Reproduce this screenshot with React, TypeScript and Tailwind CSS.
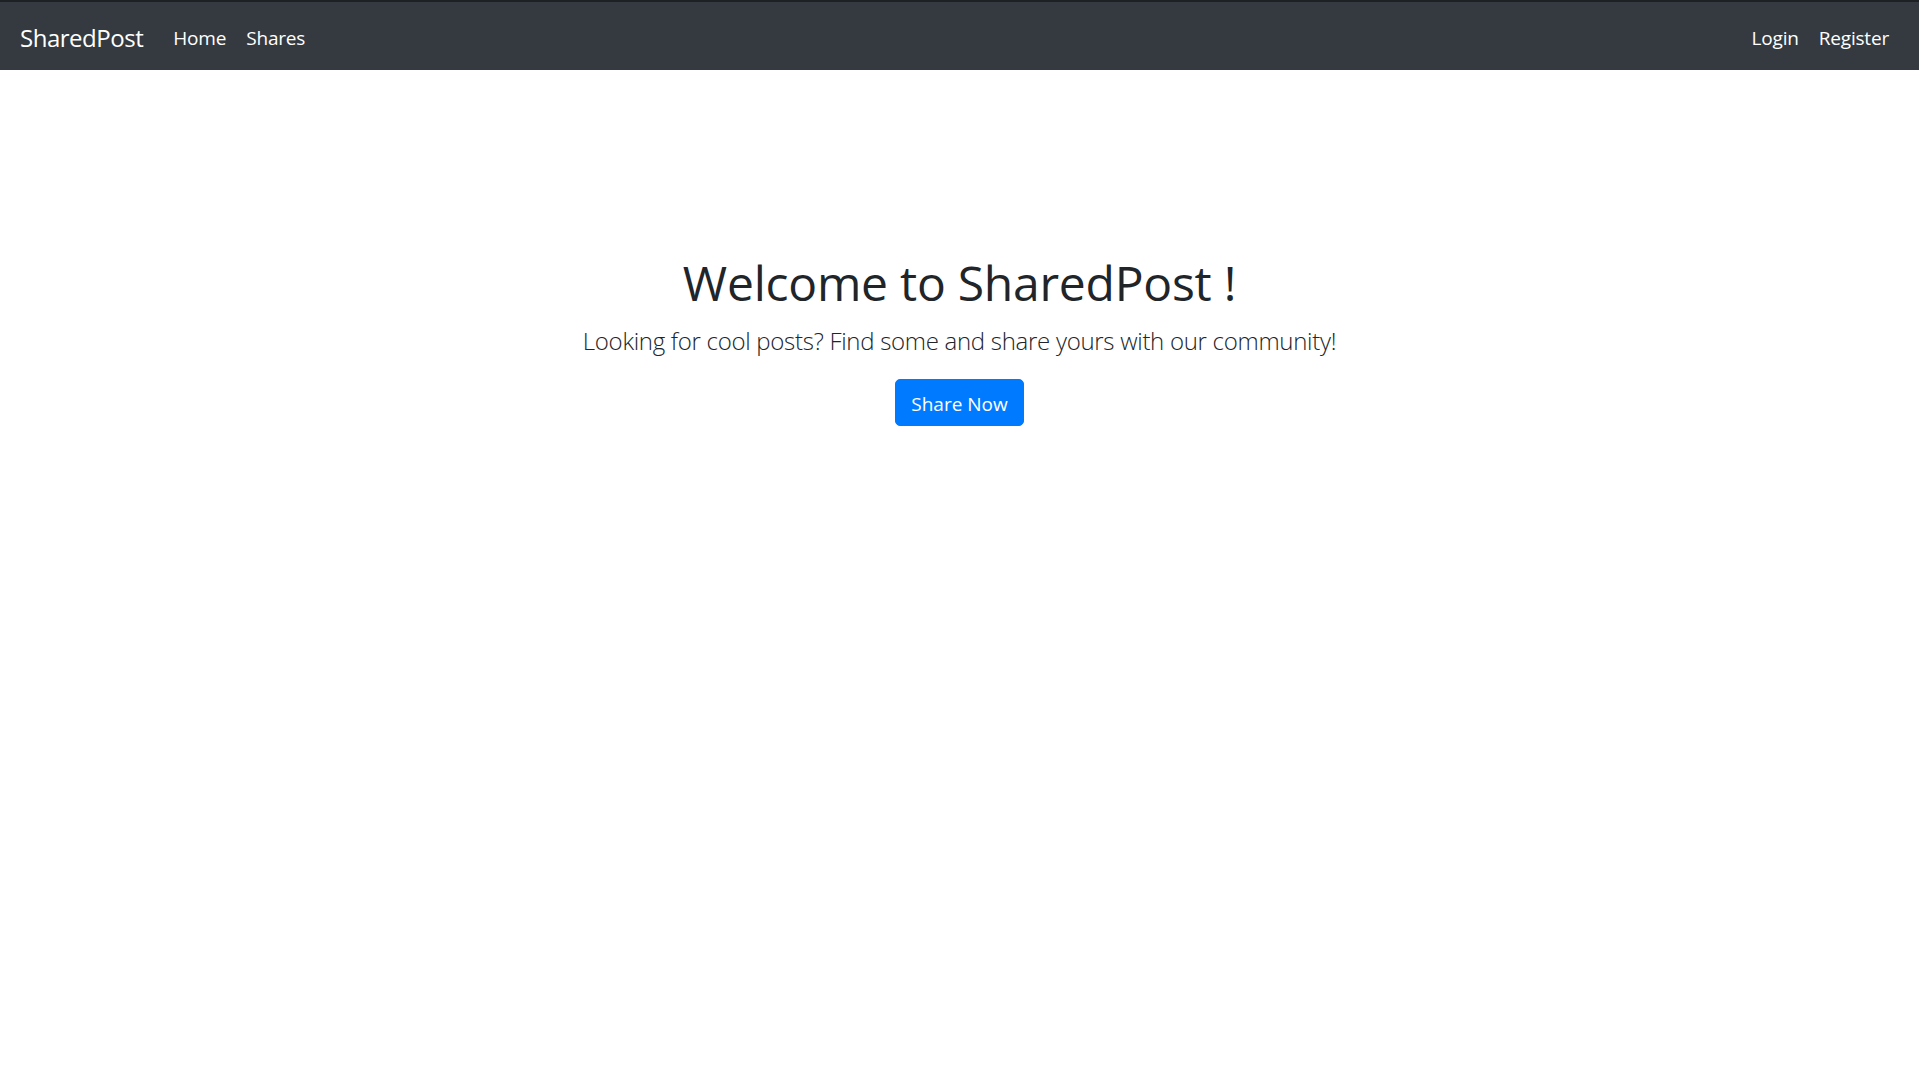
import React from "react";

export default function App() {
  const font = { fontFamily: '"Open Sans", "Noto Sans", sans-serif' };
  return (
    <div className="min-h-[1079px] bg-white" style={font}>
      <nav className="flex h-[70px] items-center justify-between border-t-2 border-[#1d2124] bg-[#343a40] px-[20px] pt-[3px]">
        <div className="flex items-center">
          <a className="mr-[20px] text-[24px] leading-[37px] tracking-[-0.02em] text-white" href="#">
            SharedPost
          </a>
          <a className="px-[10px] text-[19px] leading-[30px] tracking-[-0.01em] text-white" href="#">
            Home
          </a>
          <a className="px-[10px] text-[19px] leading-[30px] tracking-[-0.01em] text-white" href="#">
            Shares
          </a>
        </div>
        <div className="flex items-center">
          <a className="px-[10px] text-[19px] leading-[30px] tracking-[-0.01em] text-white" href="#">
            Login
          </a>
          <a className="px-[10px] text-[19px] leading-[30px] tracking-[-0.01em] text-white" href="#">
            Register
          </a>
        </div>
      </nav>
      <main className="mt-[181px] flex flex-col items-center text-[#212529]">
        <h1 className="mb-[8px] pt-[2px] text-[48px] font-normal leading-[60px] tracking-[-0.005em]">
          Welcome to SharedPost !
        </h1>
        <p className="mb-[19px] pt-[1px] text-[24px] font-light leading-[37.5px] tracking-[-0.012em]">
          Looking for cool posts? Find some and share yours with our community!
        </p>
        <a
          href="#"
          className="rounded-[5px] border border-[#007bff] bg-[#007bff] px-[15px] pt-[9.5px] pb-[5.5px] text-[19px] leading-[30px] text-white"
        >
          Share Now
        </a>
      </main>
    </div>
  );
}
